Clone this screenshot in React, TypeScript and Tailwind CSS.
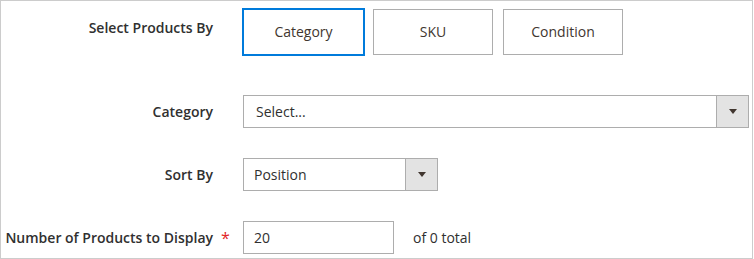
import React from 'react';

const font = { fontFamily: '"Open Sans", "Liberation Sans", sans-serif' };

function Arrow() {
  return (
    <svg width="8" height="5" viewBox="0 0 8 5" className="fill-[#41362f]">
      <path d="M0 0h8L4 5z" />
    </svg>
  );
}

function Row({ label, required, children, className = '' }: { label: string; required?: boolean; children: React.ReactNode; className?: string }) {
  return (
    <div className={`grid grid-cols-[212px_30px_1fr] ${className}`}>
      <div className="text-right text-[14px] font-semibold leading-5 text-[#303030]">{label}</div>
      <div className="pl-[8px] text-[16px] leading-5 text-[#e22626]">{required ? '*' : ''}</div>
      <div className="flex items-center">{children}</div>
    </div>
  );
}

export default function App() {
  const modes = ['Category', 'SKU', 'Condition'];
  return (
    <div style={font} className="w-[753px] h-[259px] border border-[#cccccc] bg-white pt-[7px]">
      {/* select products by */}
      <div className="grid grid-cols-[212px_30px_1fr]">
        <div className="pt-[10px] text-right text-[14px] font-semibold leading-5 text-[#303030]">Select Products By</div>
        <div />
        <div className="flex items-start">
          {modes.map((m, i) => (
            <button
              key={m}
              className={
                i === 0
                  ? '-ml-px w-[123px] h-[48px] pb-[2px] border-2 border-[#007bdb] bg-white text-[14px] text-[#41362f]'
                  : 'ml-[8px] mr-[2px] mt-px w-[120px] h-[46px] pb-[2px] border border-[#adadad] bg-white text-[14px] text-[#41362f]'
              }
            >
              {m}
            </button>
          ))}
        </div>
      </div>

      <Row label="Category" className="mt-[39px] items-center">
        <div className="flex w-[506px] h-[33px] border border-[#adadad] bg-white">
          <div className="flex-1 flex items-center pl-[12px] text-[14px] text-[#303030]">Select...</div>
          <div className="w-[32px] flex items-center justify-center border-l border-[#adadad] bg-[#e3e3e3]">
            <Arrow />
          </div>
        </div>
      </Row>

      <Row label="Sort By" className="mt-[30px] items-center">
        <div className="flex w-[195px] h-[33px] border border-[#adadad] bg-white">
          <div className="flex-1 flex items-center pl-[10px] text-[14px] text-[#303030]">Position</div>
          <div className="w-[32px] flex items-center justify-center border-l border-[#adadad] bg-[#e3e3e3]">
            <Arrow />
          </div>
        </div>
      </Row>

      <Row label="Number of Products to Display" required className="mt-[30px] items-center">
        <div className="flex w-[151px] h-[33px] items-center border border-[#adadad] bg-white pl-[10px] text-[14px] text-[#303030]">20</div>
        <span className="ml-[19px] text-[14px] text-[#303030]">of 0 total</span>
      </Row>
    </div>
  );
}
